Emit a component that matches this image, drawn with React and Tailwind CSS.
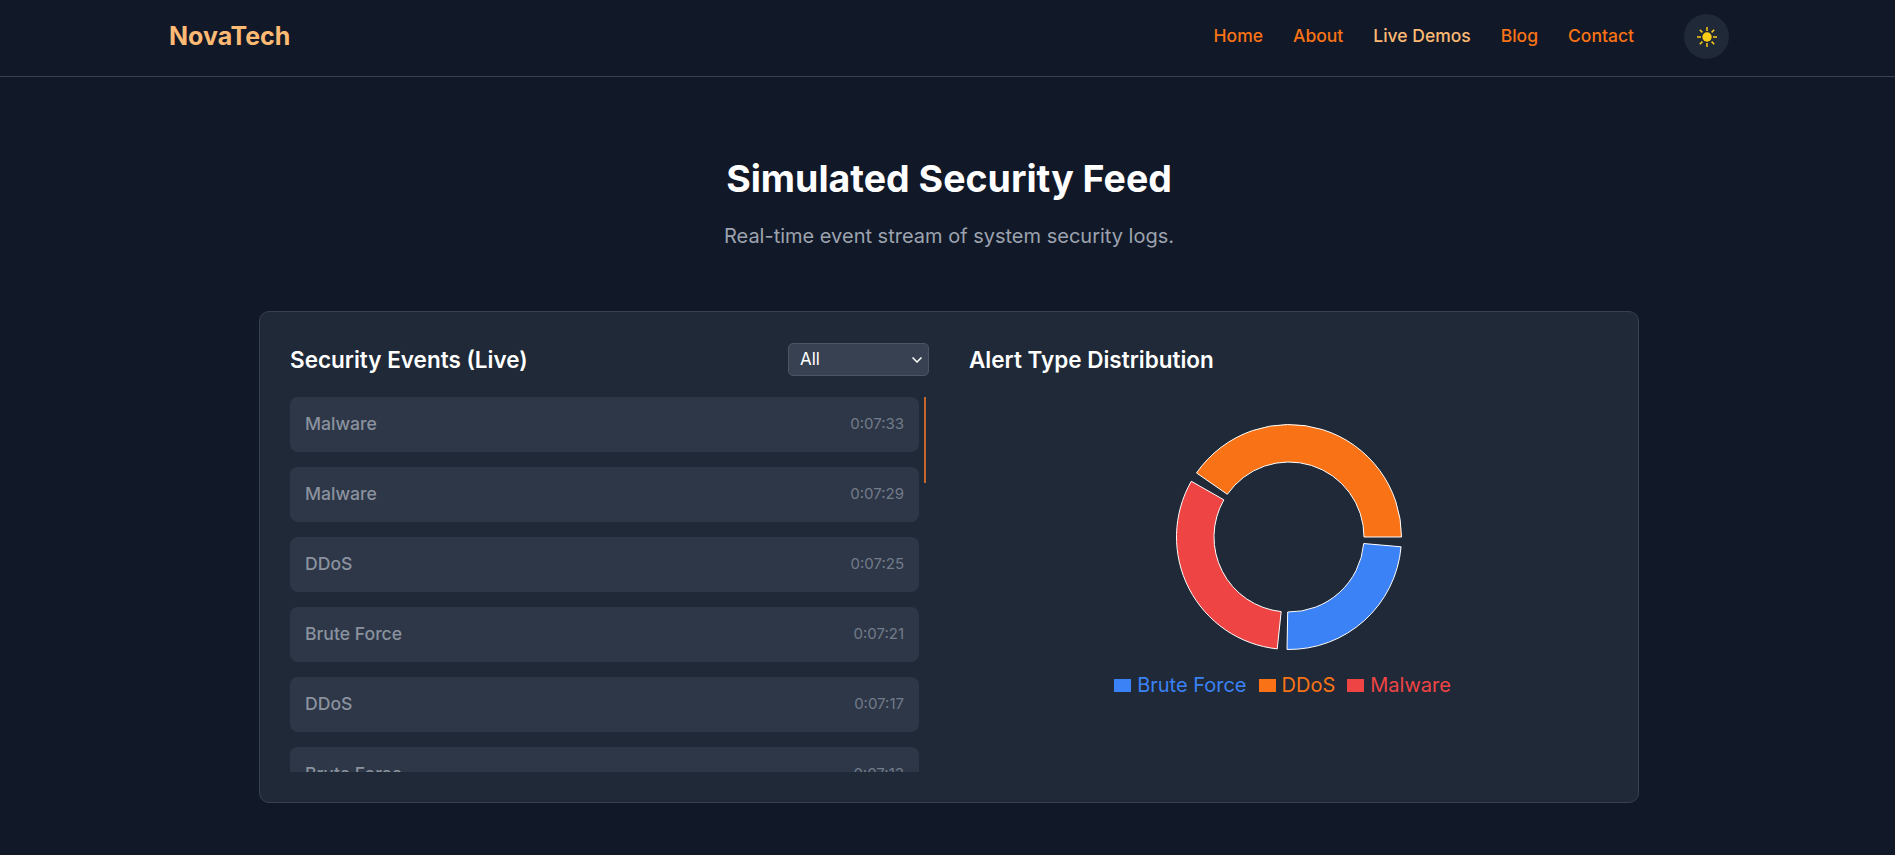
import React from 'react';

const navLinks = [
  { label: 'Home', color: 'text-[#f97316]' },
  { label: 'About', color: 'text-[#f97316]' },
  { label: 'Live Demos', color: 'text-[#fdba74]' },
  { label: 'Blog', color: 'text-[#f97316]' },
  { label: 'Contact', color: 'text-[#f97316]' },
];

const events = [
  { type: 'Malware', time: '0:07:33' },
  { type: 'Malware', time: '0:07:29' },
  { type: 'DDoS', time: '0:07:25' },
  { type: 'Brute Force', time: '0:07:21' },
  { type: 'DDoS', time: '0:07:17' },
  { type: 'Brute Force', time: '0:07:13' },
];

const legend = [
  { label: 'Brute Force', box: 'bg-[#3b82f6]', text: 'text-[#3b82f6]' },
  { label: 'DDoS', box: 'bg-[#f97316]', text: 'text-[#f97316]' },
  { label: 'Malware', box: 'bg-[#ef4444]', text: 'text-[#ef4444]' },
];

// Angles run counter-clockwise from east, like the chart library's pie
const sectors = [
  { from: 0, to: 145.3, fill: '#f97316' },
  { from: 150.3, to: 264, fill: '#ef4444' },
  { from: 269, to: 355, fill: '#3b82f6' },
];

const CX = 150;
const CY = 125;
const OUTER = 112.5;
const INNER = 75;

const point = (r, deg) => {
  const rad = (deg * Math.PI) / 180;
  return `${(CX + r * Math.cos(rad)).toFixed(2)} ${(CY - r * Math.sin(rad)).toFixed(2)}`;
};

const sectorPath = ({ from, to }) => {
  const large = to - from > 180 ? 1 : 0;
  return `M${point(OUTER, from)} A${OUTER} ${OUTER} 0 ${large} 0 ${point(OUTER, to)} L${point(INNER, to)} A${INNER} ${INNER} 0 ${large} 1 ${point(INNER, from)} Z`;
};

const SunIcon = () => (
  <svg width="22" height="22" viewBox="0 0 22 22" fill="none" stroke="#facc15" strokeWidth="1.5">
    <circle cx="11" cy="11" r="4.7" fill="#facc15" stroke="none" />
    <path d="M11 1v4M11 17v4M1 11h4M17 11h4M3.8 3.8l2.6 2.6M15.6 15.6l2.6 2.6M3.8 18.2l2.6-2.6M15.6 6.4l2.6-2.6" />
  </svg>
);

const App = () => {
  return (
    <div className="min-h-[855px] bg-[#111827] font-['Inter',sans-serif]">
      <header className="h-[77px] border-b border-[#374151]">
        <div className="ml-[169px] flex w-[1560px] items-center justify-between pt-[14px] pb-[17px]">
          <span className="text-[25px] font-bold text-[#fdba74]">NovaTech</span>
          <nav className="flex items-center gap-[30px]">
            {navLinks.map((link) => (
              <a key={link.label} className={`text-[17.5px] font-medium ${link.color}`}>
                {link.label}
              </a>
            ))}
            <button className="ml-5 flex h-[45px] w-[45px] items-center justify-center rounded-full bg-[#1f2937]">
              <SunIcon />
            </button>
          </nav>
        </div>
      </header>

      <main className="ml-[259px] w-[1380px] pt-[77px]">
        <h1 className="text-center text-[37.5px] leading-[50px] font-bold text-white">Simulated Security Feed</h1>
        <p className="mt-[18px] text-center text-xl text-[#9ca3af]">Real-time event stream of system security logs.</p>

        <section className="mt-[61px] grid h-[492px] grid-cols-2 gap-10 rounded-[10px] border border-[#374151] bg-[#1f2937] p-[30px]">
          <div>
            <div className="flex h-[35px] items-center justify-between">
              <h2 className="text-[22.5px] font-semibold text-white">Security Events (Live)</h2>
              <div className="relative">
                <select className="block h-[33px] w-[141px] appearance-none rounded-[5px] border border-[#4b5563] bg-[#374151] pl-[11px] text-[17px] text-white">
                  <option>All</option>
                  <option>Malware</option>
                  <option>DDoS</option>
                  <option>Brute Force</option>
                </select>
                <svg className="pointer-events-none absolute top-[14px] right-[7px]" width="10" height="6" viewBox="0 0 10 6" fill="none" stroke="#ffffff" strokeWidth="1.5">
                  <path d="M0.5 0.5L5 5L9.5 0.5" />
                </svg>
              </div>
            </div>
            <div className="relative mt-5 h-[375px] overflow-hidden pr-[10px]">
              <ul className="flex flex-col gap-[15px]">
                {events.map((event) => (
                  <li key={event.time} className="flex h-[55px] shrink-0 items-center justify-between rounded-lg bg-[#2d3748] px-[15px]">
                    <span className="text-[17.6px] font-medium text-[#8a929e]">{event.type}</span>
                    <span className="text-[15px] text-[#737b88]">{event.time}</span>
                  </li>
                ))}
              </ul>
              {/* scrollbar thumb */}
              <div className="absolute top-0 right-[3px] h-[86px] w-[2px] bg-[#c2662a]" />
            </div>
          </div>

          <div>
            <h2 className="flex h-[35px] items-center text-[22.5px] font-semibold text-white">Alert Type Distribution</h2>
            <div className="flex flex-col items-center pt-[35px]">
              <svg width="300" height="250" viewBox="0 0 300 250">
                {sectors.map((sector) => (
                  <path key={sector.fill} d={sectorPath(sector)} fill={sector.fill} stroke="#ffffff" strokeWidth="1" />
                ))}
              </svg>
              <ul className="mt-[9px] flex items-center">
                {legend.map((item) => (
                  <li key={item.label} className="mr-[12px] flex items-center gap-[6px]">
                    <span className={`h-[13px] w-[17px] ${item.box}`} />
                    <span className={`text-xl ${item.text}`}>{item.label}</span>
                  </li>
                ))}
              </ul>
            </div>
          </div>
        </section>
      </main>
    </div>
  );
};

export default App;
